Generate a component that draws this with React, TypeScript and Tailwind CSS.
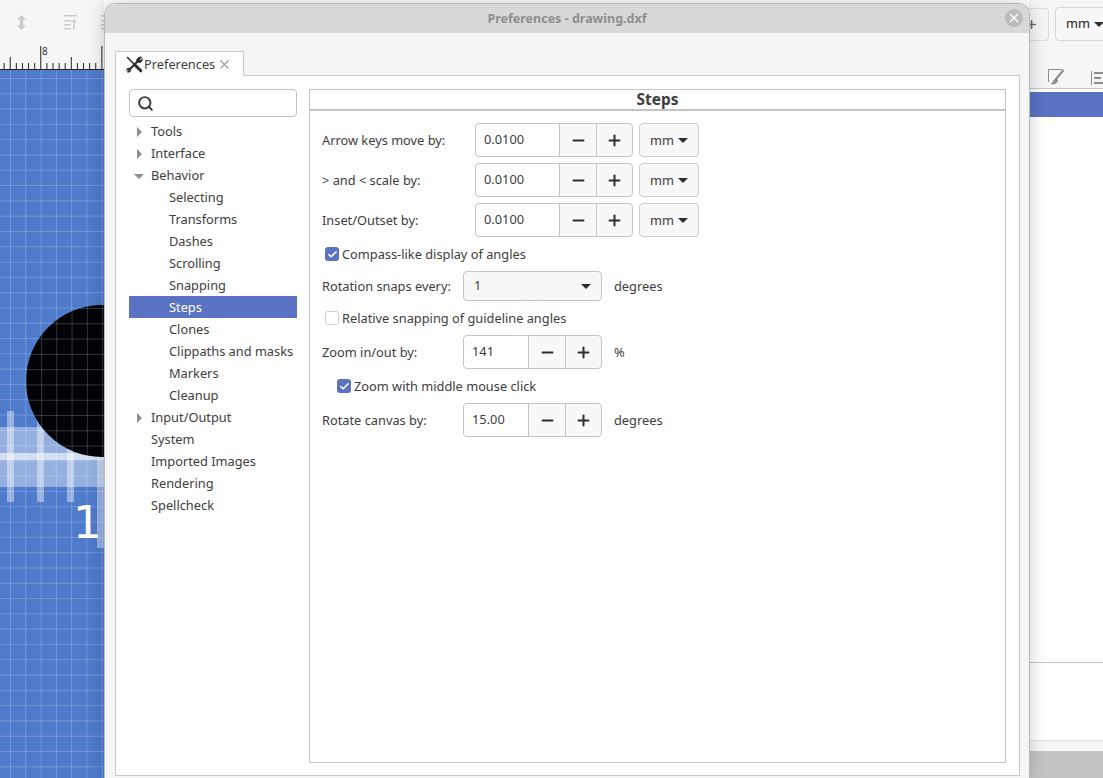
import { Search, X, Minus, Plus, Check } from "lucide-react";

const tree = [
  { label: "Tools", arrow: "right" },
  { label: "Interface", arrow: "right" },
  { label: "Behavior", arrow: "down" },
  { label: "Selecting", child: true },
  { label: "Transforms", child: true },
  { label: "Dashes", child: true },
  { label: "Scrolling", child: true },
  { label: "Snapping", child: true },
  { label: "Steps", child: true, selected: true },
  { label: "Clones", child: true },
  { label: "Clippaths and masks", child: true },
  { label: "Markers", child: true },
  { label: "Cleanup", child: true },
  { label: "Input/Output", arrow: "right" },
  { label: "System" },
  { label: "Imported Images" },
  { label: "Rendering" },
  { label: "Spellcheck" },
];

function Stepper({ value, width }: { value: string; width: string }) {
  return (
    <div className="flex h-[34px] rounded-[4px] border border-[#c4c4c4] bg-[#f8f8f8] text-[#3d3d3d]">
      <div className={`flex items-center rounded-l-[4px] bg-white pl-2 ${width}`}>{value}</div>
      <div className="flex w-[37px] items-center justify-center border-l border-[#c4c4c4] text-[#2e2e2e]">
        <Minus size={17} strokeWidth={2.8} />
      </div>
      <div className="flex w-[36px] items-center justify-center border-l border-[#c4c4c4] text-[#2e2e2e]">
        <Plus size={17} strokeWidth={2.8} />
      </div>
    </div>
  );
}

function Caret() {
  return <span className="h-0 w-0 border-x-[5px] border-t-[5px] border-x-transparent border-t-[#2e2e2e]" />;
}

function UnitRow({ label }: { label: string }) {
  return (
    <div className="flex h-[34px] items-center">
      <span className="w-[153px] pt-0.5">{label}</span>
      <Stepper value="0.0100" width="w-[83px]" />
      <div className="ml-1.5 flex h-[34px] w-[60px] items-center justify-center gap-1 rounded-[4px] border border-[#d0d0d0] bg-[#f8f8f8]">
        <span className="pt-0.5">mm</span>
        <Caret />
      </div>
    </div>
  );
}

function CheckRow({ label, checked, indent }: { label: string; checked?: boolean; indent: string }) {
  return (
    <div className={`flex h-[22px] items-center gap-[3px] ${indent}`}>
      {checked ? (
        <span className="flex h-[14px] w-[14px] items-center justify-center rounded-[3px] bg-[#5a72c4] text-white">
          <Check size={11} strokeWidth={3.5} />
        </span>
      ) : (
        <span className="h-[14px] w-[14px] rounded-[3px] border border-[#cfcfcf] bg-white" />
      )}
      <span className="pt-0.5">{label}</span>
    </div>
  );
}

function Ruler() {
  const ticks = Array.from({ length: 18 }, (_, i) => -2 + i * 6.11);
  return (
    <svg width="104" height="25" className="block">
      {ticks.map((x, i) => {
        const step = i % 10;
        const h = step === 7 ? 23 : step === 2 ? 12 : 6;
        return <line key={i} x1={x} x2={x} y1={25 - h} y2={25} stroke="#222" strokeWidth="1" />;
      })}
    </svg>
  );
}

function ToolsIcon() {
  return (
    <svg width="17" height="17" viewBox="0 0 17 17" fill="none" stroke="#2a2a2a" className="mr-px shrink-0">
      <path d="M1.500 1.500 9 9" strokeWidth="1.500" strokeLinecap="round" />
      <path d="M9.500 9.500 14.800 14.800" strokeWidth="3" strokeLinecap="round" />
      <path d="M3.500 13.500 12 5" strokeWidth="2.200" />
      <path d="M15.800 1.200 13.500 3.500 13.800 4.200 14.800 4.300 16.300 2.700C16.700 5 14.800 7 12.500 6.300L10.800 5.500C10.100 3 12.500 .5 15.800 1.200Z" fill="#2a2a2a" strokeWidth="0.800" />
      <path d="M1 12.500C2.500 11 5 12.500 4.800 14.500 4.500 16 2.500 16.800 1 16L2.800 14.300 2.500 13.800 1.500 13.800 .6 14.800Z" fill="#2a2a2a" strokeWidth="0.500" />
    </svg>
  );
}

export default function App() {
  return (
    <div className="relative flex h-[778px] w-[1103px] overflow-hidden bg-white font-['Noto_Sans',sans-serif] text-[12.8px] text-[#3d3d3d]">
      {/* app behind the dialog */}
      <div className="flex w-[104px] shrink-0 flex-col">
        <div className="flex h-[44px] items-center bg-[#f6f6f6] pl-[17px] text-[#cacaca]">
          <svg width="9" height="15" viewBox="0 0 9 15" fill="currentColor">
            <path d="M4.500 0 9 4.500H6.200v6H9L4.500 15 0 10.500h2.800v-6H0z" />
          </svg>
          <svg width="13" height="15" viewBox="0 0 13 15" fill="currentColor" className="ml-[38px]">
            <path d="M0 0h13v1.500H0zM0 5h7v1.500H0zM0 9h7v1.500H0zM0 13h7v1.500H0zM9.300 15V6.500L7.800 8 7.200 7 10 4l2.800 3-.6 1-1.500-1.500V15z" />
          </svg>
          <svg width="3" height="15" viewBox="0 0 3 15" fill="currentColor" className="ml-6">
            <path d="M0 0h3v1.500H0zM0 5h3v1.500H0zM0 9h3v1.500H0zM0 13h3v1.500H0z" />
          </svg>
        </div>
        <div className="relative h-[25px] bg-[#f6f6f6]">
          <Ruler />
          <span className="absolute left-[42px] top-0 text-[10px] text-[#333]">8</span>
        </div>
        <div className="relative flex-1 overflow-hidden border-t border-[#222] bg-[#4f7bcd] bg-[linear-gradient(rgba(255,255,255,0.2)_1px,transparent_1px),linear-gradient(90deg,rgba(255,255,255,0.2)_1px,transparent_1px)] bg-[size:15.3px_15.3px] bg-[position:10px_8px]">
          <div className="absolute left-0 top-[357px] h-[60px] w-[104px] bg-white/40" />
          <div className="absolute left-0 top-[383px] h-[7px] w-[104px] bg-white/60" />
          <div className="absolute left-[7px] top-[341px] h-[91px] w-[7px] bg-white/40" />
          <div className="absolute left-[37px] top-[341px] h-[91px] w-[7px] bg-white/40" />
          <div className="absolute left-[67px] top-[341px] h-[91px] w-[7px] bg-white/40" />
          <div className="absolute left-[97px] top-[341px] h-[137px] w-[7px] bg-white/40" />
          <div className="absolute left-[26px] top-[235px] h-[152px] w-[152px] rounded-full bg-[#020306] bg-[linear-gradient(rgba(255,255,255,0.2)_1px,transparent_1px),linear-gradient(90deg,rgba(255,255,255,0.2)_1px,transparent_1px)] bg-[size:15.3px_15.3px] bg-[position:15px_3px]" />
          <span className="absolute left-[73px] top-[430px] font-['DejaVu_Sans',sans-serif] text-[45px] leading-none text-white">1</span>
        </div>
      </div>
      <div className="flex-1" />
      <div className="flex w-[74px] shrink-0 flex-col bg-[#f9f9f9]">
        <div className="flex h-[44px] items-center gap-1.5 bg-[#f6f6f6] pt-1">
          <div className="flex h-[33px] w-[20px] shrink-0 items-center justify-start rounded-r-[4px] border border-l-0 border-[#dcdcdc]">
            <Plus size={13} strokeWidth={3} className="-ml-[4px] shrink-0 text-[#6e6e6e]" />
          </div>
          <div className="flex h-[34px] w-[60px] shrink-0 items-center gap-1 rounded-[4px] border border-[#d4d4d4] bg-[#f8f8f8] pl-2.5 text-[#222]">
            mm
            <Caret />
          </div>
        </div>
        <div className="flex h-[45px] items-end justify-between border-b border-[#c4c4c4] bg-[#f6f6f6] pb-[3px] pl-[19px]">
          <svg width="17" height="16" viewBox="0 0 17 16" fill="none" stroke="#8c8c8c">
            <path d="M14 .5H.5V13" />
            <path d="M15.500 1 8 10" strokeWidth="2" />
            <path d="M8 9.500c-2 .5-2 3-4.500 5.500 3 0 6-1 6-4z" fill="#8c8c8c" />
          </svg>
          <svg width="12" height="14" viewBox="0 0 12 14" fill="#8c8c8c">
            <path d="M0 0h1v14H0zM3 1h9v2H3zM3 6h7v2H3zM3 11h9v2H3z" />
          </svg>
        </div>
        <div className="h-[3px] bg-white" />
        <div className="h-[25px] bg-[#5a72c4]" />
        <div className="h-[546px] border-b border-[#c4c4c4] bg-white" />
        <div className="h-[78px] border-b border-[#e0e0e0] bg-white" />
        <div className="h-[10px] bg-[#f6f6f6]" />
        <div className="flex-1 bg-[#c4c4c4]" />
      </div>

      {/* preferences dialog */}
      <div className="absolute left-[104px] top-[3px] flex h-[775px] w-[926px] flex-col rounded-t-[12px] border border-b-0 border-[#b8b8b8] bg-[#f5f5f5] shadow-[0_0_18px_rgba(0,0,0,0.2)]">
        <div className="relative flex h-[29px] shrink-0 items-center justify-center rounded-t-[11px] bg-[#d8d8d8] pt-0.5 text-[12.5px] font-bold text-[#8e8e8e]">
          Preferences - drawing.dxf
          <span className="absolute right-[6px] top-[5px] flex h-[18px] w-[18px] items-center justify-center rounded-full bg-[#bcbcbc] text-white">
            <X size={14} strokeWidth={2.4} />
          </span>
        </div>
        <div className="flex flex-1 flex-col pl-2.5 pr-[9px] pt-[18px]">
          <div className="relative z-10 -mb-px flex h-[25px] w-[129px] items-center border border-b-0 border-[#c8c8c8] bg-white pl-[10px]">
            <ToolsIcon />
            <span className="pt-0.5">Preferences</span>
            <X size={15} strokeWidth={1.8} className="ml-[2px] text-[#9a9a9a]" />
          </div>
          <div className="flex h-[701px] gap-3 border border-[#c8c8c8] bg-white pl-[13px] pr-[13px] pt-[13px]">
            <div className="w-[168px] shrink-0">
              <div className="mb-[3px] flex h-[28px] items-center rounded-[4px] border border-[#c4c4c4] bg-white pl-[7px]">
                <Search size={17} strokeWidth={2.8} className="text-[#3d3d3d]" />
              </div>
              {tree.map((t) => (
                <div
                  key={t.label}
                  className={`relative flex h-[22px] items-center pt-0.5 ${t.child ? "pl-10" : "pl-[22px]"} ${t.selected ? "bg-[#5a72c4] text-white" : ""}`}
                >
                  {t.arrow === "right" && (
                    <span className="absolute left-2 top-[7px] h-0 w-0 border-y-[5px] border-l-[5px] border-y-transparent border-l-[#8e8e8e]" />
                  )}
                  {t.arrow === "down" && (
                    <span className="absolute left-[5px] top-[10px] h-0 w-0 border-x-[5px] border-t-[5px] border-x-transparent border-t-[#8e8e8e]" />
                  )}
                  {t.label}
                </div>
              ))}
            </div>
            <div className="mb-[12px] flex-1 border border-[#c4c4c4]">
              <div className="flex h-[21px] items-center justify-center border-b-2 border-[#c4c4c4] text-[15.4px] font-bold">
                Steps
              </div>
              <div className="flex flex-col gap-1.5 pl-3 pt-3">
                <UnitRow label="Arrow keys move by:" />
                <UnitRow label="> and < scale by:" />
                <UnitRow label="Inset/Outset by:" />
                <CheckRow label="Compass-like display of angles" checked indent="pl-[3px]" />
                <div className="flex h-[30px] items-center">
                  <span className="w-[141px] pt-0.5">Rotation snaps every:</span>
                  <div className="flex h-[30px] w-[139px] items-center justify-between rounded-[4px] border border-[#c4c4c4] bg-[#f8f8f8] px-[10px]">
                    1
                    <Caret />
                  </div>
                  <span className="ml-3 pt-0.5">degrees</span>
                </div>
                <CheckRow label="Relative snapping of guideline angles" indent="pl-[3px]" />
                <div className="flex h-[34px] items-center">
                  <span className="w-[141px] pt-0.5">Zoom in/out by:</span>
                  <Stepper value="141" width="w-[64px]" />
                  <span className="ml-3 pt-0.5">%</span>
                </div>
                <CheckRow label="Zoom with middle mouse click" checked indent="pl-[15px]" />
                <div className="flex h-[34px] items-center">
                  <span className="w-[141px] pt-0.5">Rotate canvas by:</span>
                  <Stepper value="15.00" width="w-[64px]" />
                  <span className="ml-3 pt-0.5">degrees</span>
                </div>
              </div>
            </div>
          </div>
        </div>
      </div>
    </div>
  );
}
